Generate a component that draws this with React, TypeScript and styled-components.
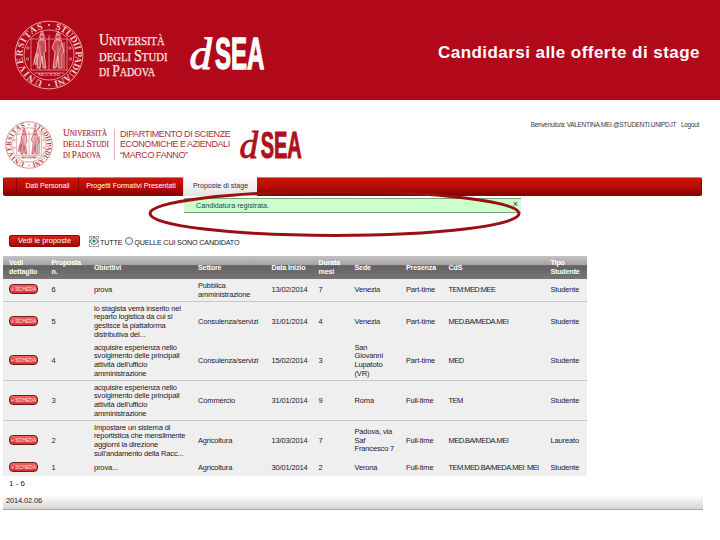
import React from 'react';
import styled, { createGlobalStyle } from 'styled-components';

interface Proposal {
  id: number;
  height: number;
  goals: string[];
  sector: string[];
  date: string;
  months: number;
  place: string[];
  presence: string;
  cds: string;
  student: string;
  line?: boolean;
}

const proposals: Proposal[] = [
  { id: 6, height: 23, goals: ['prova'], sector: ['Pubblica', 'amministrazione'], date: '13/02/2014', months: 7, place: ['Venezia'], presence: 'Part-time', cds: 'TEM:MED:MEE', student: 'Studente', line: true },
  { id: 5, height: 39, goals: ['lo stagista verrà inserito nel', 'reparto logistica da cui si', 'gestisce la piattaforma', 'distributiva del...'], sector: ['Consulenza/servizi'], date: '31/01/2014', months: 4, place: ['Venezia'], presence: 'Part-time', cds: 'MED.BA/MEDA.MEI', student: 'Studente' },
  { id: 4, height: 40, goals: ['acquisire esperienza nello', 'svolgimento delle principali', "attività dell'ufficio", 'amministrazione'], sector: ['Consulenza/servizi'], date: '15/02/2014', months: 3, place: ['San', 'Giovanni', 'Lupatoto', '(VR)'], presence: 'Part-time', cds: 'MED', student: 'Studente', line: true },
  { id: 3, height: 40, goals: ['acquisire esperienza nello', 'svolgimento delle principali', "attività dell'ufficio", 'amministrazione'], sector: ['Commercio'], date: '31/01/2014', months: 9, place: ['Roma'], presence: 'Full-time', cds: 'TEM', student: 'Studente', line: true },
  { id: 2, height: 39, goals: ['Impostare un sistema di', 'reportistica che mensilmente', 'aggiorni la direzione', "sull'andamento della Racc..."], sector: ['Agricoltura'], date: '13/03/2014', months: 7, place: ['Padova, via', 'Saf', 'Francesco 7'], presence: 'Full-time', cds: 'MED.BA/MEDA.MEI', student: 'Laureato' },
  { id: 1, height: 16, goals: ['prova...'], sector: ['Agricoltura'], date: '30/01/2014', months: 2, place: ['Verona'], presence: 'Full-time', cds: 'TEM.MED.BA/MEDA.MEI: MEI', student: 'Studente' },
];

const headings = [
  ['Vedi', 'dettaglio'],
  ['Proposta', 'n.'],
  ['Obiettivi'],
  ['Settore'],
  ['Data Inizio'],
  ['Durata', 'mesi'],
  ['Sede'],
  ['Presenza'],
  ['CdS'],
  ['Tipo', 'Studente'],
];

const serif = '"Liberation Serif", serif';
const sans = '"Liberation Sans", sans-serif';

const Seal = ({ id, color, size }: { id: string; color: string; size: number }) => (
  <svg width={size} height={size} viewBox="0 0 70 70" fill="none" stroke={color}>
    <defs>
      <path id={`${id}Left`} d="M35 61.5 A26.5 26.5 0 0 1 35 8.5" />
      <path id={`${id}Right`} d="M35 8.5 A26.5 26.5 0 0 1 35 61.5" />
    </defs>
    <circle cx="35" cy="35" r="33.9" strokeWidth="0.8" />
    <circle cx="35" cy="35" r="25" strokeWidth="0.7" />
    <g fill={color} stroke="none" fontFamily={serif} fontSize="9.5" fontWeight="bold">
      <text>
        <textPath href={`#${id}Left`} startOffset="6" textLength="71">UNIVERSITAS</textPath>
      </text>
      <text>
        <textPath href={`#${id}Right`} startOffset="6" textLength="72">STUDII PADUANI</textPath>
      </text>
      <circle cx="35" cy="5" r="1" />
      <circle cx="35" cy="65" r="1" />
    </g>
    <path strokeWidth="0.6" d="M17 19H53M17 19V50M53 19V50M35 15V50M17 50H53M20 53H50" />
    <path strokeWidth="0.6" opacity="0.8" d="M26 50V25M44 50V25M23 22L31 48M40 48L48 23" />
    <g fill={color} fillOpacity="0.35" strokeWidth="0.8">
      <circle cx="28" cy="17" r="2.4" />
      <circle cx="44" cy="17" r="2.4" />
      <path d="M25 20L31 20L32 31L30 33L32 48H29L28 36L26 48H23L24 34L22 45L20 41L23 30Z" />
      <path d="M41 20L47 20L50 31L48 34L48 48H45L44 36L42 48H39L41 32L38 28Z" />
      <path d="M26 15L28 11L30 15M42 15L44 11L46 15" />
      <path d="M19 45L24 32M50 22V49" />
    </g>
    <text x="35" y="56" textAnchor="middle" fill={color} stroke="none" fontFamily={serif} fontSize="5">MCCXXII</text>
    <g strokeWidth="0.6">
      <circle cx="14" cy="28" r="1.2" />
      <circle cx="13.5" cy="39" r="1.2" />
      <circle cx="56" cy="28" r="1.2" />
      <circle cx="56.5" cy="39" r="1.2" />
    </g>
  </svg>
);

const UniversityName = ({ color, width, height }: { color: string; width: number; height: number }) => (
  <svg width={width} height={height} viewBox="0 0 70 46" preserveAspectRatio="none" fill={color} stroke={color} strokeWidth="0.25" fontFamily={serif} fontSize="12">
    <text x="0" y="13" textLength="65.5" lengthAdjust="spacingAndGlyphs">
      <tspan fontSize="16">U</tspan>NIVERSITÀ
    </text>
    <text x="0" y="28.5" textLength="68.5" lengthAdjust="spacingAndGlyphs">
      DEGLI <tspan fontSize="16">S</tspan>TUDI
    </text>
    <text x="0" y="44" textLength="56" lengthAdjust="spacingAndGlyphs">
      DI <tspan fontSize="16">P</tspan>ADOVA
    </text>
  </svg>
);

const DSea = ({ color, width, height }: { color: string; width: number; height: number }) => (
  <svg width={width} height={height} viewBox="0 0 76 36" preserveAspectRatio="none" fill={color} stroke={color}>
    <text x="-0.5" y="32" fontFamily={serif} fontStyle="italic" fontSize="45" strokeWidth="1">d</text>
    <text x="25" y="32" fontFamily={sans} fontWeight="bold" fontSize="44" strokeWidth="1.3" textLength="49.5" lengthAdjust="spacingAndGlyphs">SEA</text>
  </svg>
);

const App = () => (
  <Page>
    <GlobalStyle />
    <Banner>
      <Seal id="sealBanner" color="#f6c9c6" size={70} />
      <UniversityName color="#ffe9e4" width={70} height={46} />
      <DSea color="#fff" width={76} height={36} />
      <Title>Candidarsi alle offerte di stage</Title>
    </Banner>

    <Masthead>
      <Seal id="sealMasthead" color="#b5343a" size={48} />
      <UniversityName color="#b52b35" width={47} height={32} />
      <Department>
        <span>DIPARTIMENTO DI SCIENZE</span>
        <span>ECONOMICHE E AZIENDALI</span>
        <span>“MARCO FANNO”</span>
      </Department>
      <DSea color="#ae1020" width={63} height={30} />
      <Welcome>
        <span>Benvenuto/a: VALENTINA.MEI.@STUDENTI.UNIPD.IT</span>
        <span>Logout</span>
      </Welcome>
    </Masthead>

    <Nav>
      <Tab $width={62}>Dati Personali</Tab>
      <Tab $width={105}>Progetti Formativi Presentati</Tab>
      <Tab $width={74} $active>Proposte di stage</Tab>
      <Highlight viewBox="0 0 376 52">
        <ellipse cx="188.5" cy="25.5" rx="184.5" ry="22" />
      </Highlight>
    </Nav>

    <Message>
      <span>Candidatura registrata.</span>
      <Close>×</Close>
    </Message>

    <Filters>
      <ShowButton>Vedi le proposte</ShowButton>
      <Focus><Radio $checked /></Focus>
      <Option>TUTTE</Option>
      <Radio />
      <Option>QUELLE CUI SONO CANDIDATO</Option>
    </Filters>

    <Table>
      <HeadRow>
        {headings.map((lines) => (
          <Cell key={lines[0]}>
            {lines.map((line) => <span key={line}>{line}</span>)}
          </Cell>
        ))}
      </HeadRow>
      {proposals.map((item) => (
        <Row key={item.id} $height={item.height} $line={item.line}>
          <Cell><SheetButton>+ SCHEDA</SheetButton></Cell>
          <Cell>{item.id}</Cell>
          <Cell>{item.goals.map((line) => <span key={line}>{line}</span>)}</Cell>
          <Cell>{item.sector.map((line) => <span key={line}>{line}</span>)}</Cell>
          <Cell>{item.date}</Cell>
          <Cell>{item.months}</Cell>
          <Cell>{item.place.map((line) => <span key={line}>{line}</span>)}</Cell>
          <Cell>{item.presence}</Cell>
          <Cell $spacing={-0.55}>{item.cds}</Cell>
          <Cell>{item.student}</Cell>
        </Row>
      ))}
    </Table>
    <Pager>1 - 6</Pager>
    <Footer>2014.02.06</Footer>
  </Page>
);

export default App;

const GlobalStyle = createGlobalStyle`
  * {
    box-sizing: border-box;
  }

  body {
    margin: 0;
    background: #fff;
  }
`;

const Page = styled.div`
  width: 720px;
  height: 540px;
  overflow: hidden;
  background: #fff;
  color: #1d1828;
  font-family: "Liberation Sans", sans-serif;
  font-size: 7.5px;

  svg {
    display: block;
    flex: none;
    overflow: visible;
  }
`;

const Banner = styled.header`
  display: flex;
  align-items: flex-start;
  height: 100px;
  padding: 20px 20px 0 14px;
  background: #b1081a;

  svg:nth-of-type(2) {
    margin: 12px 0 0 15px;
  }

  svg:nth-of-type(3) {
    margin: 17px 0 0 21px;
  }
`;

const Title = styled.h1`
  width: 262px;
  margin: 23px 0 0 auto;
  color: #fff;
  font-size: 17px;
  letter-spacing: 0.45px;
  line-height: 20px;
  white-space: nowrap;
`;

const Masthead = styled.div`
  display: flex;
  align-items: flex-start;
  height: 77px;
  padding: 21px 21px 0 5px;

  svg:nth-of-type(2) {
    margin: 6px 0 0 10px;
  }

  svg:nth-of-type(3) {
    margin: 10px 0 0 7px;
  }
`;

const Department = styled.div`
  display: flex;
  flex-direction: column;
  width: 119px;
  height: 31px;
  margin: 8px 0 0 4px;
  padding-left: 5px;
  border-left: 1px solid #e3b5b8;
  color: #b0303a;
  font-size: 9px;
  line-height: 10.3px;
  letter-spacing: -0.42px;
  white-space: nowrap;
`;

const Welcome = styled.div`
  display: flex;
  gap: 5px;
  margin-left: auto;
  color: #3b3644;
  font-size: 6.5px;
  letter-spacing: -0.32px;
  line-height: 8px;
  white-space: nowrap;
`;

const Nav = styled.nav`
  position: relative;
  display: flex;
  width: 699px;
  height: 19px;
  margin-left: 3px;
  padding-left: 12px;
  border: 1px solid #8e0604;
  border-top-color: #dc7770;
  border-radius: 2px;
  background: linear-gradient(#cb1608, #b80c04 50%, #880000);
`;

const Tab = styled.div<{ $width: number; $active?: boolean }>`
  display: flex;
  align-items: center;
  justify-content: center;
  width: ${({ $width }) => $width}px;
  height: ${({ $active }) => ($active ? 20 : 16)}px;
  margin-top: ${({ $active }) => ($active ? -2 : 0)}px;
  border-left: 1px solid ${({ $active }) => ($active ? '#ddd' : '#850503')};
  background: ${({ $active }) => ($active ? 'linear-gradient(#fff, #e4e4e4)' : 'none')};
  color: ${({ $active }) => ($active ? '#37303e' : '#fff')};
  font-size: 7.1px;
  white-space: nowrap;
`;

const Highlight = styled.svg`
  position: absolute;
  z-index: 2;
  left: 142px;
  top: 10px;
  width: 376px;
  height: 52px;
  fill: none;
  stroke: #981014;
  stroke-width: 3;
`;

const Message = styled.div`
  display: flex;
  justify-content: space-between;
  width: 337px;
  height: 15px;
  margin: 2px 0 0 184px;
  padding: 0 3px 0 12px;
  border-top: 1px solid #7ba47b;
  border-bottom: 1px solid #7ba47b;
  background: #ccffcc;
  color: #304330;
  font-size: 7.2px;
  line-height: 14px;
`;

const Close = styled.span`
  font-size: 9px;
  line-height: 10px;
`;

const Filters = styled.div`
  display: flex;
  align-items: center;
  height: 14px;
  margin: 21px 0 0 9px;
`;

const ShowButton = styled.button`
  width: 71px;
  height: 12px;
  margin-right: 9px;
  padding: 0;
  border: 1px solid #8b0804;
  border-radius: 2px;
  background: linear-gradient(#d52519, #a50602);
  color: #fff;
  font-family: inherit;
  font-size: 7.4px;
  line-height: 10px;
`;

const Focus = styled.span`
  display: flex;
  align-items: center;
  justify-content: center;
  width: 10px;
  height: 11px;
  border: 1px dashed #999;
`;

const Radio = styled.span<{ $checked?: boolean }>`
  flex: none;
  width: 8px;
  height: 8px;
  border: 1px solid #557183;
  border-radius: 50%;
  background: ${({ $checked }) => ($checked ? 'radial-gradient(#259b36 0 1px, #eef6ee 2px)' : '#f3f7fb')};
`;

const Option = styled.span`
  margin: 3px 3px 0 1px;
  font-size: 7.2px;
  letter-spacing: -0.18px;
  line-height: 10px;
`;

const Table = styled.div`
  width: 584px;
  margin: 8px 0 0 3px;
  background: #efefef;
`;

const Row = styled.div<{ $height: number; $line?: boolean }>`
  display: grid;
  grid-template-columns: 42.5px 42.5px 104px 73.5px 47px 36px 51.5px 42.5px 102px 1fr;
  align-items: center;
  height: ${({ $height }) => $height}px;
  padding: 1px 0 0 6px;
  border-bottom: ${({ $line }) => ($line ? '1px solid #c8c8c8' : 'none')};
  font-size: 7.5px;
  letter-spacing: -0.15px;
  line-height: 8.7px;
`;

const HeadRow = styled(Row).attrs({ $height: 23 })`
  background: linear-gradient(#c4c2c2, #a5a3a3 38%, #636161 42%, #777575);
  color: #fff;
  font-size: 7.1px;
  font-weight: bold;
`;

const Cell = styled.div<{ $spacing?: number }>`
  display: flex;
  flex-direction: column;
  letter-spacing: ${({ $spacing }) => ($spacing ? `${$spacing}px` : 'inherit')};
  white-space: nowrap;
`;

const SheetButton = styled.button`
  width: 29px;
  height: 10px;
  margin-bottom: 3px;
  padding: 0;
  border: 1px solid #651d20;
  border-radius: 4px;
  background: linear-gradient(#f16565, #d93338);
  color: #ffe3df;
  font-family: inherit;
  font-size: 5px;
  line-height: 8px;
`;

const Pager = styled.div`
  height: 19px;
  padding: 3px 0 0 9px;
  font-size: 8px;
  line-height: 9px;
`;

const Footer = styled.footer`
  width: 700px;
  height: 15px;
  margin-left: 3px;
  padding-left: 3px;
  border-bottom: 1px solid #aaa;
  background: linear-gradient(#fff, #d5d5d5);
  font-size: 7.4px;
  letter-spacing: -0.1px;
  line-height: 12px;
`;
